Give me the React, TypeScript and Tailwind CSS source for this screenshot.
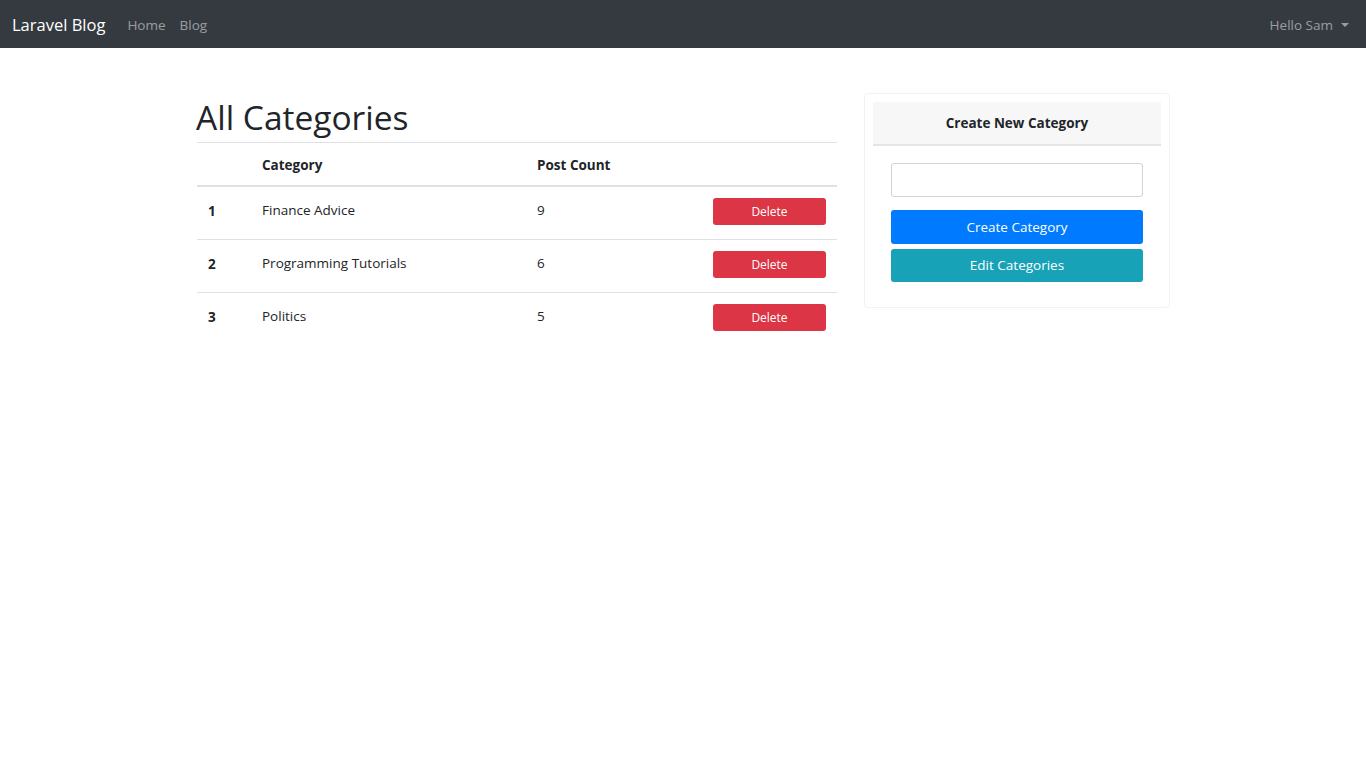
import React from "react";

const rows = [
  { id: 1, name: "Finance Advice", count: 9 },
  { id: 2, name: "Programming Tutorials", count: 6 },
  { id: 3, name: "Politics", count: 5 },
];

export default function App() {
  return (
    <div className="min-h-screen bg-white text-[#212529]" style={{ fontFamily: '"Open Sans", "Noto Sans", sans-serif' }}>
      <nav className="h-[48px] bg-[#343a40] flex items-center pl-[12px] pt-[2px]">
        <span className="text-white text-[16.5px] mr-[22px]">Laravel Blog</span>
        <span className="text-[13.5px] text-white/50 mr-[14px]">Home</span>
        <span className="text-[13.5px] text-white/50">Blog</span>
        <span className="ml-auto text-[13.5px] text-white/50 flex items-center mr-[17px]">
          Hello Sam
          <span className="ml-[8px] inline-block w-0 h-0 border-l-[4px] border-r-[4px] border-t-[4px] border-l-transparent border-r-transparent border-t-white/50"></span>
        </span>
      </nav>

      <div className="flex pl-[197px] pt-[45px] gap-[27px]">
        <div className="w-[640px]">
          <h1 className="text-[33.5px] leading-[1.2] mt-[4px] mb-[5px] ml-[-1px]">All Categories</h1>
          <table className="w-full text-[13.5px] border-collapse">
            <thead>
              <tr className="border-t border-[#dee2e6] border-b-2">
                <th className="w-[53px] text-left px-[11px] h-[43px] pt-[2px] font-bold"></th>
                <th className="w-[275px] text-left px-[12px] pt-[2px] font-bold">Category</th>
                <th className="text-left px-[12px] pt-[2px] font-bold">Post Count</th>
                <th></th>
              </tr>
            </thead>
            <tbody>
              {rows.map((r) => (
                <tr key={r.id} className="border-t border-[#dee2e6] first:border-t-0">
                  <td className={`px-[11px] pt-[14px] align-top font-bold ${r.id === 1 ? "h-[54px]" : "h-[53px]"}`}>{r.id}</td>
                  <td className="px-[12px] pt-[13px] align-top">{r.name}</td>
                  <td className="px-[12px] pt-[13px] align-top">{r.count}</td>
                  <td className="pr-[11px] pt-[11px] align-top text-right">
                    <button className="w-[113px] h-[27px] bg-[#dc3545] text-white text-[12px] rounded-[3px] pt-[1px]">Delete</button>
                  </td>
                </tr>
              ))}
            </tbody>
          </table>
        </div>

        <div className="w-[306px] self-start border border-[#f2f2f2] rounded-[4px] p-[8px] pb-[25px]">
          <div className="h-[44px] bg-[#f7f7f7] border-b-2 border-[#e5e5e5] flex items-center justify-center font-bold text-[13.5px] pt-[1px]">
            Create New Category
          </div>
          <div className="px-[18px] pt-[17px] flex flex-col">
            <input className="h-[34px] border border-[#ced4da] rounded-[3px] px-2 outline-none" />
            <button className="mt-[13px] h-[34px] bg-[#007bff] text-white text-[13.5px] rounded-[3px]">Create Category</button>
            <button className="mt-[5px] h-[33px] bg-[#17a2b8] text-white text-[13.5px] rounded-[3px]">Edit Categories</button>
          </div>
        </div>
      </div>
    </div>
  );
}
